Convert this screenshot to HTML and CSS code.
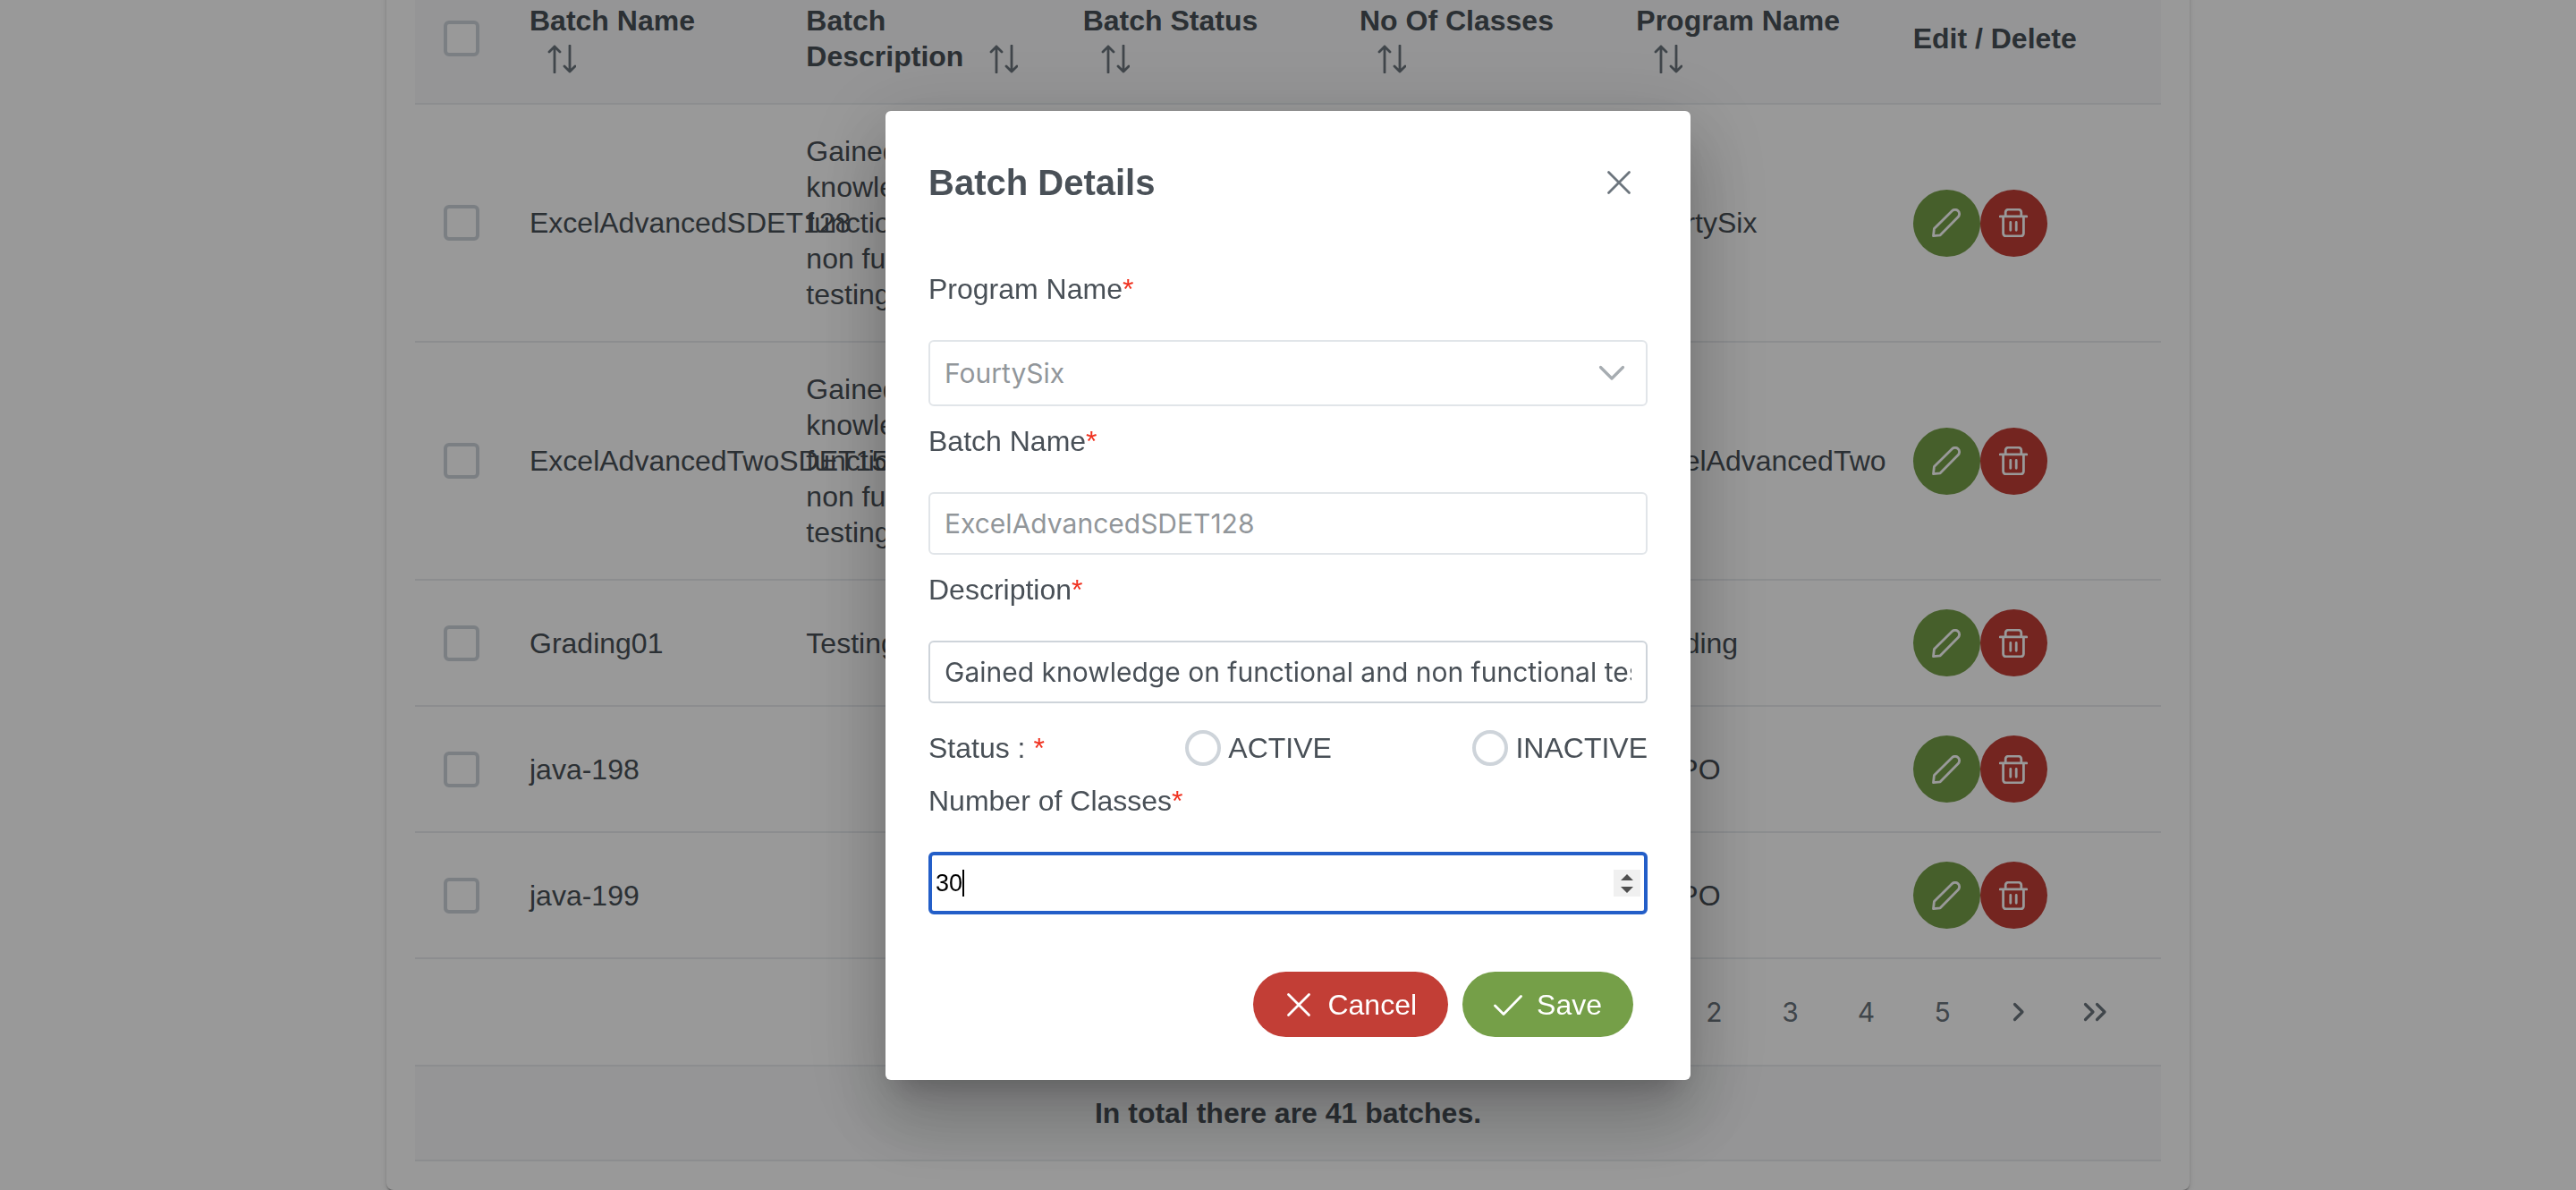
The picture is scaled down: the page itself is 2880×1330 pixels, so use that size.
FILE: index.html
```html
<!DOCTYPE html>
<html lang="en">
<head>
<meta charset="utf-8">
<title>Manage Batch</title>
<link rel="stylesheet" href="styles.css">
</head>
<body>
<svg class="sprite" aria-hidden="true">
  <symbol id="i-sort" viewBox="0 0 32 32"><path d="M8 31V2M2 8l6-6 6 6M25 1v29M19 24l6 6 6-6"/></symbol>
  <symbol id="i-pencil" viewBox="0 0 32 32"><path d="M1.5 30.6l.9-8L22.4 2.7a4.8 4.8 0 0 1 6.8 0 4.8 4.8 0 0 1 0 6.8L9.2 29.8z"/></symbol>
  <symbol id="i-trash" viewBox="0 0 32 32"><path d="M1.200 8.800h29.600M4.600 8.800v19a3 3 0 0 0 3 3h16.800a3 3 0 0 0 3-3v-19M7.200 8.800V4.200a3 3 0 0 1 3-3h11.600a3 3 0 0 1 3 3v4.600M12.800 15.500v8.800M19.200 15.500v8.800"/></symbol>
  <symbol id="i-times" viewBox="0 0 32 32"><path d="M4.500 4.500l23 23M27.500 4.500l-23 23"/></symbol>
  <symbol id="i-check" viewBox="0 0 32 32"><path d="M1.500 17l9.500 9.500L30.500 6.500"/></symbol>
  <symbol id="i-down" viewBox="0 0 32 32"><path d="M3.500 9.500L16 22 28.500 9.500"/></symbol>
  <symbol id="i-right" viewBox="0 0 32 32"><path d="M11.500 7.500l8.500 8.500-8.500 8.500"/></symbol>
  <symbol id="i-dright" viewBox="0 0 32 32"><path d="M5.500 7.500L14 16l-8.500 8.500M18.500 7.500L27 16l-8.500 8.500"/></symbol>
</svg>

<main class="page">
  <section class="card">
    <table class="batches">
      <colgroup><col class="col-check"><col><col><col><col><col><col></colgroup>
      <thead>
        <tr>
          <th><input class="box" type="checkbox" aria-label="Select all"></th>
          <th>Batch Name<br><svg class="icon sort"><use href="#i-sort"/></svg></th>
          <th>Batch Description <svg class="icon sort"><use href="#i-sort"/></svg></th>
          <th>Batch Status<br><svg class="icon sort"><use href="#i-sort"/></svg></th>
          <th>No Of Classes<br><svg class="icon sort"><use href="#i-sort"/></svg></th>
          <th>Program Name<br><svg class="icon sort"><use href="#i-sort"/></svg></th>
          <th>Edit / Delete</th>
        </tr>
      </thead>
      <tbody>
        <tr>
          <td><input class="box" type="checkbox" aria-label="Select row"></td>
          <td>ExcelAdvancedSDET128</td>
          <td>Gained knowledge on functional and non functional testing</td>
          <td></td><td></td>
          <td>FourtySix</td>
          <td><div class="actions"><button class="round edit" aria-label="Edit"><svg class="icon"><use href="#i-pencil"/></svg></button><button class="round delete" aria-label="Delete"><svg class="icon"><use href="#i-trash"/></svg></button></div></td>
        </tr>
        <tr>
          <td><input class="box" type="checkbox" aria-label="Select row"></td>
          <td>ExcelAdvancedTwoSDET150</td>
          <td>Gained knowledge on functional and non functional testing</td>
          <td></td><td></td>
          <td>ExcelAdvancedTwo</td>
          <td><div class="actions"><button class="round edit" aria-label="Edit"><svg class="icon"><use href="#i-pencil"/></svg></button><button class="round delete" aria-label="Delete"><svg class="icon"><use href="#i-trash"/></svg></button></div></td>
        </tr>
        <tr>
          <td><input class="box" type="checkbox" aria-label="Select row"></td>
          <td>Grading01</td>
          <td>Testing</td>
          <td></td><td></td>
          <td>Grading</td>
          <td><div class="actions"><button class="round edit" aria-label="Edit"><svg class="icon"><use href="#i-pencil"/></svg></button><button class="round delete" aria-label="Delete"><svg class="icon"><use href="#i-trash"/></svg></button></div></td>
        </tr>
        <tr>
          <td><input class="box" type="checkbox" aria-label="Select row"></td>
          <td>java-198</td>
          <td></td>
          <td></td><td></td>
          <td>SMPO</td>
          <td><div class="actions"><button class="round edit" aria-label="Edit"><svg class="icon"><use href="#i-pencil"/></svg></button><button class="round delete" aria-label="Delete"><svg class="icon"><use href="#i-trash"/></svg></button></div></td>
        </tr>
        <tr>
          <td><input class="box" type="checkbox" aria-label="Select row"></td>
          <td>java-199</td>
          <td></td>
          <td></td><td></td>
          <td>SMPO</td>
          <td><div class="actions"><button class="round edit" aria-label="Edit"><svg class="icon"><use href="#i-pencil"/></svg></button><button class="round delete" aria-label="Delete"><svg class="icon"><use href="#i-trash"/></svg></button></div></td>
        </tr>
      </tbody>
    </table>
    <nav class="paginator" aria-label="Pages">
      <button class="page-link">2</button>
      <button class="page-link">3</button>
      <button class="page-link">4</button>
      <button class="page-link">5</button>
      <button class="page-link" aria-label="Next page"><svg class="icon arrow"><use href="#i-right"/></svg></button>
      <button class="page-link" aria-label="Last page"><svg class="icon arrow"><use href="#i-dright"/></svg></button>
    </nav>
    <div class="summary">In total there are 41 batches.</div>
  </section>
</main>

<div class="mask">
  <form class="dialog" role="dialog" aria-labelledby="dialog-title">
    <header class="dialog-head">
      <h2 class="dialog-title" id="dialog-title">Batch Details</h2>
      <button class="close" type="button" aria-label="Close"><svg class="icon"><use href="#i-times"/></svg></button>
    </header>
    <div class="dialog-body">
      <div class="field">
        <label for="program">Program Name<span class="req">*</span></label>
        <div class="stack faded">
          <select class="control select" id="program" disabled><option>FourtySix</option></select>
          <svg class="icon chevron"><use href="#i-down"/></svg>
        </div>
      </div>
      <div class="field">
        <label for="name">Batch Name<span class="req">*</span></label>
        <input class="control faded" id="name" type="text" value="ExcelAdvancedSDET128" disabled>
      </div>
      <div class="field">
        <label for="description">Description<span class="req">*</span></label>
        <input class="control" id="description" type="text" value="Gained knowledge on functional and non functional testing">
      </div>
      <div class="status" role="radiogroup" aria-labelledby="status-label">
        <span id="status-label">Status : <span class="req">*</span></span>
        <label class="choice"><input class="radio" type="radio" name="status">ACTIVE</label>
        <label class="choice"><input class="radio" type="radio" name="status">INACTIVE</label>
      </div>
      <div class="field">
        <label for="classes">Number of Classes<span class="req">*</span></label>
        <div class="stack">
          <input class="control number" id="classes" type="number" value="30">
          <span class="caret"></span>
          <svg class="spinner" viewBox="0 0 30 30"><path d="M15 5l7 7H8zM15 26l-7-7h14z"/></svg>
        </div>
      </div>
    </div>
    <footer class="dialog-foot">
      <button class="pill cancel" type="button"><svg class="icon"><use href="#i-times"/></svg>Cancel</button>
      <button class="pill save" type="button"><svg class="icon"><use href="#i-check"/></svg>Save</button>
    </footer>
  </form>
</div>
</body>
</html>
```
FILE: styles.css
```css
* { box-sizing: border-box; }

body {
  margin: 0;
  background: #fff;
  color: #495057;
  font: 32px/40px "Liberation Sans", Arial, Helvetica, sans-serif;
}

button, input, select { font: inherit; color: inherit; margin: 0; }
button { border: 0; padding: 0; cursor: pointer; }

.sprite { display: none; }

.icon {
  width: 32px;
  height: 32px;
  flex: none;
  fill: none;
  stroke: currentColor;
  stroke-width: 2.8;
  stroke-linecap: round;
  stroke-linejoin: round;
}

/* Page, scrolled to its end */
.page {
  height: 100vh;
  overflow: hidden;
  display: flex;
  flex-direction: column;
  justify-content: flex-end;
}

.card {
  flex: none;
  width: 70%;
  margin: 0 auto;
  padding: 64px 32px 32px;
  border-radius: 8px;
  background: #fff;
  box-shadow: 0 4px 2px -2px rgba(0, 0, 0, .2), 0 2px 2px rgba(0, 0, 0, .14), 0 2px 6px rgba(0, 0, 0, .12);
}

.batches {
  width: 100%;
  table-layout: fixed;
  border-collapse: separate;
  border-spacing: 0;
}

.col-check { width: 96px; }

.batches th,
.batches td {
  padding: 32px;
  border-bottom: 2px solid #e9ecef;
  text-align: left;
  vertical-align: middle;
}

.batches th:first-child,
.batches td:first-child { padding: 0 0 0 32px; }

.batches th { background: #f8f9fa; font-weight: 700; }

.sort { margin: -4px 0 -4px 20px; vertical-align: middle; color: #6c757d; }

.box,
.radio {
  appearance: none;
  display: block;
  flex: none;
  width: 40px;
  height: 40px;
  border: 4px solid #ced4da;
  border-radius: 6px;
  background: #fff;
}

.radio { border-radius: 50%; }

.actions { display: flex; }

.round {
  display: grid;
  place-items: center;
  width: 75px;
  height: 75px;
  border-radius: 50%;
  color: #fff;
}

.edit, .save { background: #759f48; }
.delete, .cancel { background: #c23e36; }

.paginator {
  display: flex;
  justify-content: flex-end;
  align-items: center;
  height: 120px;
  padding: 0 32px;
  border-bottom: 2px solid #e9ecef;
  color: #6c757d;
}

.page-link {
  display: grid;
  place-items: center;
  width: 85px;
  height: 76px;
  background: none;
  font: 30px/36px Inter, "Liberation Sans", sans-serif;
}

.arrow { stroke-width: 3.2; }

.summary {
  padding: 32px;
  border-bottom: 2px solid #e9ecef;
  background: #f8f9fa;
  font-weight: 700;
  text-align: center;
}

/* Modal */
.mask {
  position: fixed;
  inset: 0;
  display: grid;
  place-items: center;
  padding-top: 1px;
  background: rgba(0, 0, 0, .4);
}

.dialog {
  width: 900px;
  max-width: 100%;
  border-radius: 6px;
  background: #fff;
  box-shadow: 0 22px 30px -14px rgba(0, 0, 0, .2), 0 48px 76px 6px rgba(0, 0, 0, .14), 0 18px 92px 16px rgba(0, 0, 0, .12);
}

.dialog-head {
  display: flex;
  align-items: center;
  justify-content: space-between;
  padding: 48px;
}

.dialog-title { margin: 0; font-size: 40px; line-height: 48px; }

.close {
  display: grid;
  place-items: center;
  width: 64px;
  height: 64px;
  background: none;
  color: #6c757d;
}

.dialog-body { padding: 0 48px 64px; }

.field {
  display: flex;
  flex-direction: column;
  gap: 38px;
  padding-top: 20px;
  line-height: 38px;
}

.req { color: #f0311f; }

.control {
  display: block;
  width: 100%;
  height: 70px;
  padding: 0 16px;
  border: 2px solid #ced4da;
  border-radius: 6px;
  background: #fff;
  outline: 0;
  font: 30px/36px Inter, "Liberation Sans", sans-serif;
}

.faded { opacity: .6; }

.stack { display: grid; align-items: center; }
.stack > * { grid-area: 1 / 1; }

.select { appearance: none; height: 74px; opacity: 1; }

.chevron { justify-self: end; margin-right: 24px; stroke-width: 3.2; color: #6c757d; }

.number {
  appearance: textfield;
  padding: 0 4px;
  border: 4px solid #235ec8;
  color: #000;
  font: 27px/32px "Liberation Sans", Arial, sans-serif;
}

.number::-webkit-inner-spin-button { appearance: none; }

.caret { width: 2px; height: 30px; margin-left: 38px; background: #000; }

.spinner {
  justify-self: end;
  width: 30px;
  height: 30px;
  margin-right: 8px;
  background: #f0f0f0;
  fill: #4f4f4f;
}

.status {
  display: flex;
  align-items: center;
  justify-content: space-between;
  margin-top: 30px;
}

.choice { display: flex; align-items: center; gap: 8px; }

.dialog-foot {
  display: flex;
  justify-content: flex-end;
  gap: 16px;
  padding: 0 64px 48px;
}

.pill {
  display: flex;
  align-items: center;
  gap: 16px;
  height: 73px;
  padding: 0 35px;
  border-radius: 64px;
  color: #fff;
}
```
